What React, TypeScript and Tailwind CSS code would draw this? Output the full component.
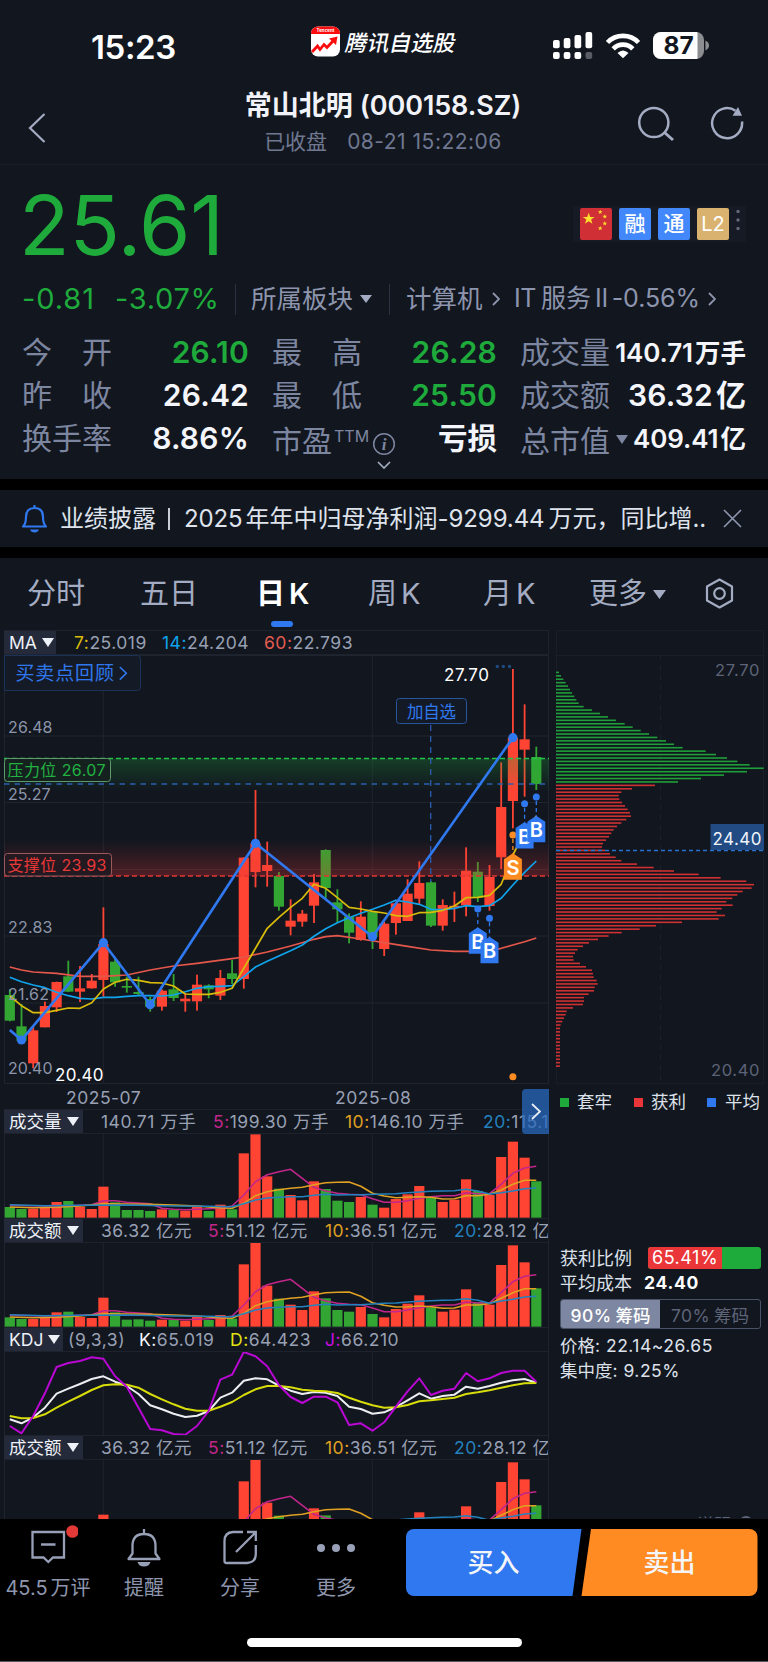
import React from "react";

/* ---------- data ---------- */
// [up, high, bodyTop, bodyBottom, low] in chart units (three per pixel)
const candles: [number, number, number, number, number][] = [
  [0, 1108, 1125, 1202, 1204], [0, 1152, 1219, 1262, 1268], [1, 1220, 1231, 1330, 1345], [1, 1145, 1158, 1222, 1222],
  [1, 1085, 1086, 1162, 1176], [0, 1022, 1069, 1115, 1116], [1, 1038, 1105, 1115, 1146], [1, 1062, 1082, 1105, 1106],
  [1, 862, 972, 1080, 1130], [0, 1015, 1025, 1087, 1100], [0, 1070, 1098, 1103, 1118], [0, 1070, 1116, 1122, 1126],
  [0, 1130, 1137, 1160, 1175], [1, 1108, 1112, 1160, 1172], [0, 1062, 1108, 1134, 1143], [1, 1120, 1136, 1144, 1175],
  [1, 1064, 1094, 1144, 1172], [0, 1093, 1096, 1108, 1135], [1, 1050, 1074, 1127, 1140], [0, 1020, 1060, 1077, 1092],
  [1, 712, 713, 1077, 1106], [1, 510, 670, 756, 802], [1, 665, 735, 753, 800], [0, 756, 768, 860, 872],
  [1, 838, 902, 920, 946], [1, 870, 881, 905, 920], [1, 762, 787, 857, 909], [0, 688, 690, 804, 836],
  [0, 808, 847, 868, 907], [0, 880, 890, 938, 970], [1, 844, 890, 960, 962], [0, 876, 876, 950, 987],
  [1, 905, 911, 987, 1008], [1, 845, 850, 909, 944], [1, 778, 821, 903, 903], [1, 724, 789, 836, 853],
  [0, 783, 787, 917, 921], [1, 838, 855, 917, 932], [1, 815, 857, 861, 906], [1, 682, 752, 856, 889],
  [0, 726, 755, 833, 846], [1, 735, 771, 858, 872], [1, 427, 561, 712, 747], [1, 147, 353, 543, 625],
  [1, 253, 358, 389, 530], [0, 380, 411, 492, 510],
];
const ma7 = [1128, 1157, 1178, 1178, 1171, 1164, 1165, 1148, 1107, 1087, 1078, 1081, 1088, 1089, 1098, 1122, 1123, 1123, 1117, 1105, 1045, 985, 925, 892, 862, 835, 793, 805, 833, 862, 867, 874, 879, 887, 889, 878, 877, 871, 858, 833, 832, 826, 793, 705, 635, 588];
const ma14 = [1072, 1085, 1095, 1103, 1117, 1127, 1135, 1137, 1132, 1132, 1129, 1127, 1127, 1128, 1125, 1115, 1105, 1100, 1099, 1097, 1070, 1041, 1024, 1008, 992, 975, 949, 926, 908, 893, 880, 868, 855, 841, 846, 853, 868, 869, 865, 857, 860, 857, 835, 795, 757, 723];
const ma60: [number, number][] = [[0, 1041], [1, 1050], [2, 1056], [4, 1060], [6, 1069], [8, 1069], [10, 1065], [12, 1050], [14, 1038], [16, 1030], [19, 1016], [20, 1011], [22, 996], [24, 978], [26, 958], [27, 950], [28, 947], [30, 957], [32, 968], [34, 979], [36, 990], [38, 994], [40, 994], [41, 992], [42, 985], [43, 975], [44, 965], [45, 954]];
const swing: [number, number][] = [[0, 1230], [1, 1260], [8, 968], [12, 1154], [21, 670], [31, 950], [43, 353]];

const volTops = [381, 387, 386, 384, 366, 363, 380, 387, 320, 367, 390, 390, 393, 388, 390, 392, 377, 393, 374, 388, 220, 163, 289, 326, 345, 361, 304, 327, 362, 366, 351, 374, 383, 357, 343, 318, 354, 366, 359, 298, 333, 345, 231, 185, 233, 304];
const amtTops = [712, 717, 717, 714, 697, 695, 711, 714, 653, 697, 719, 718, 722, 719, 719, 722, 711, 720, 705, 716, 553, 489, 617, 656, 674, 690, 634, 655, 690, 695, 681, 702, 712, 687, 671, 646, 682, 695, 689, 628, 667, 674, 555, 496, 547, 625];
const avg5: [number, number][] = [[0, 376], [4, 379], [7, 374], [8, 362], [9, 362], [10, 367], [11, 369], [12, 371], [13, 385], [14, 388], [15, 389], [16, 388], [17, 386], [18, 384], [19, 378], [20, 345], [21, 305], [22, 284], [23, 275], [24, 268], [25, 295], [26, 322], [27, 333], [28, 340], [29, 343], [30, 344], [31, 356], [32, 367], [33, 367], [34, 362], [35, 355], [36, 350], [37, 347], [38, 347], [39, 338], [40, 341], [41, 341], [42, 313], [43, 280], [44, 264], [45, 259]];
const avg10: [number, number][] = [[0, 381], [2, 383], [4, 382], [6, 378], [8, 371], [10, 372], [12, 373], [14, 375], [16, 378], [18, 384], [19, 385], [20, 370], [21, 347], [22, 335], [23, 329], [24, 325], [25, 322], [26, 314], [27, 308], [28, 307], [29, 306], [30, 319], [31, 340], [32, 348], [33, 353], [34, 352], [35, 350], [36, 352], [37, 357], [38, 356], [39, 347], [40, 347], [41, 343], [42, 330], [43, 313], [44, 301], [45, 301]];
const avg20: [number, number][] = [[0, 374], [3, 377], [6, 376], [10, 375], [14, 378], [17, 379], [19, 380], [20, 371], [21, 360], [22, 354], [23, 352], [24, 350], [25, 350], [26, 346], [27, 343], [28, 345], [29, 344], [30, 344], [32, 342], [33, 341], [34, 338], [35, 336], [36, 334], [37, 333], [38, 332], [39, 328], [40, 333], [41, 342], [42, 338], [43, 333], [44, 326], [45, 324]];

const kLine = [1018, 1030, 1012, 983, 941, 926, 912, 897, 889, 905, 918, 942, 976, 988, 1001, 1011, 1007, 993, 953, 938, 902, 895, 898, 917, 932, 942, 936, 938, 948, 980, 987, 1001, 997, 981, 961, 940, 956, 948, 944, 920, 926, 918, 908, 901, 897, 908];
const dLine = [1008, 1015, 1014, 1003, 983, 965, 948, 930, 916, 913, 914, 923, 942, 958, 973, 986, 992, 992, 980, 966, 945, 928, 918, 918, 922, 929, 932, 934, 939, 953, 965, 976, 983, 982, 975, 964, 961, 957, 953, 942, 937, 931, 923, 916, 910, 909];
const jLine = [1038, 1060, 1008, 940, 861, 849, 843, 832, 836, 889, 920, 983, 1047, 1051, 1062, 1064, 1038, 993, 899, 884, 816, 829, 859, 915, 951, 969, 950, 950, 967, 1035, 1030, 1052, 1027, 980, 934, 895, 945, 932, 926, 879, 904, 895, 879, 872, 872, 905];

const chipsLocked = [57, 63, 70, 77, 84, 90, 96, 103, 109, 116, 131, 156, 180, 204, 228, 254, 278, 302, 327, 352, 378, 402, 428, 497, 528, 561, 592, 629, 671, 621, 552, 483, 414];
const chipsProfit = [345, 276, 244, 236, 238, 246, 255, 263, 270, 273, 259, 244, 231, 221, 214, 207, 198, 189, 186, 195, 210, 227, 244, 291, 341, 402, 476, 542, 619, 642, 635, 608, 592, 577, 559, 578, 545, 530, 555, 536, 426, 348, 299, 245, 206, 174, 147, 129, 113, 105, 99, 101, 120, 138, 156, 159, 161, 170, 173, 164, 162, 146, 132, 132, 129, 99, 80, 77, 72, 67, 62, 60, 60, 60, 60, 60, 60, 60, 60, 60, 60, 60, 60];

const cx = (i: number) => 9.8 + 11.7 * i;
const cy = (v: number) => 620 + v / 3;
const iy = (v: number) => 1080 + v / 3;
const withIndex = (a: number[]): [number, number][] => a.map((v, i) => [i, v]);
const pts = (a: [number, number][], f: (v: number) => number) => a.map(([i, v]) => `${cx(i).toFixed(1)},${f(v).toFixed(1)}`).join(" ");

const RED = "#ff4433";
const GREEN = "#33a532";
const GRID = "#1f242f";
const SANS = "Inter, 'Noto Sans CJK SC', sans-serif";

/* ---------- small pieces ---------- */
const Caret = ({ w = 12, h = 9, c = "#a3acc2" }) => (
  <svg width={w} height={h} viewBox="0 0 12 9" preserveAspectRatio="none" className="shrink-0"><path d="M0 0H12L6 9Z" fill={c} /></svg>
);
const Arrow = ({ w = 8, h = 14, c = "#8c95ad", s = 1.8 }) => (
  <svg width={w} height={h} viewBox={`0 0 ${w} ${h}`} className="shrink-0" fill="none" stroke={c} strokeWidth={s}><path d={`M1 1L${w - 1} ${h / 2}L1 ${h - 1}`} /></svg>
);
const STAR = "M0 -6L1.500 -1.900H5.900L2.400 0.800L3.700 5L0 2.500L-3.700 5L-2.400 0.800L-5.900 -1.900H-1.500Z";

function StatusBar() {
  return (
    <div className="flex h-[86px] w-full items-start">
      <div className="ml-[91px] mt-[27px] w-[220px] text-[33px] font-semibold leading-[40px] tracking-[-0.4px] text-white">15:23</div>
      <svg width="29" height="31" viewBox="0 0 29 31" className="mt-[26px]">
        <rect y="0.5" width="29" height="30" rx="7" fill="#fff" />
        <path d="M0 8V7.5A7 7 0 0 1 7 .5H22A7 7 0 0 1 29 7.500V8Z" fill="#fb0d0d" />
        <text x="14.500" y="6.300" fontSize="4.500" fontWeight="700" textAnchor="middle" fill="#fff" fontFamily={SANS}>Tencent</text>
        <path d="M1 26L6.500 20L9 23.500L13 18.500L16 21.500L23 14" fill="none" stroke="#fb0d0d" strokeWidth="2.800" />
        <path d="M18 12.500L26.500 10.500L25 19Z" fill="#fb0d0d" />
      </svg>
      <div className="ml-[6px] mt-[26px] w-[207px]"><span className="inline-block -skew-x-12 text-[22px] font-medium leading-[34px] text-white">腾讯自选股</span></div>
      <svg width="156" height="30" viewBox="553 31 156 30" className="mt-[31px]">
        <g fill="#fff">
          <rect x="553" y="40" width="6.700" height="8.300" rx="2" /><rect x="563.700" y="38" width="6.700" height="10.300" rx="2" />
          <rect x="574.500" y="35" width="6.700" height="13.300" rx="2" /><rect x="585.500" y="32" width="6.700" height="16.300" rx="2" />
          <rect x="553" y="52" width="6.700" height="7" rx="2" /><rect x="563.700" y="52" width="6.700" height="7" rx="2" />
          <rect x="574.500" y="52" width="6.700" height="7" rx="2" /><rect x="585.500" y="52" width="6.700" height="7" rx="2" opacity=".3" />
        </g>
        <g fill="none" stroke="#fff" strokeWidth="4.600">
          <path d="M607.500 42.500A21.500 21.500 0 0 1 638.500 42.500" />
          <path d="M613.200 48.800A13.500 13.500 0 0 1 632.800 48.800" />
        </g>
        <path d="M617.500 53Q623 48 628.500 53L623 58.300Z" fill="#fff" />
        <clipPath id="batt"><rect x="653" y="32" width="51" height="27" rx="8" /></clipPath>
        <g clipPath="url(#batt)"><rect x="653" y="32" width="51" height="27" fill="#8b8d91" /><rect x="653" y="32" width="44.500" height="27" fill="#fff" /></g>
        <path d="M706 41.500A4.500 4.500 0 0 1 706 49.500Z" fill="#8b8d91" stroke="#8b8d91" strokeWidth="1.200" />
        <text x="678.700" y="54.300" fontSize="24.500" fontWeight="700" textAnchor="middle" fill="#12161f" fontFamily={SANS}>87</text>
      </svg>
    </div>
  );
}

function NavBar() {
  return (
    <div className="flex h-[79px] items-start border-b border-[#191e28]">
      <svg width="18" height="30" viewBox="0 0 18 30" className="ml-[28px] mt-[27px]" fill="none" stroke="#a3acc2" strokeWidth="2.200"><path d="M16.500 1L2 15L16.500 29" /></svg>
      <div className="flex w-[592px] flex-col items-center pl-[82px]">
        <div className="mt-[2px] text-[27px] font-semibold leading-[36px] text-[#f1f3f8] whitespace-nowrap"><span>常山北明</span><span className="ml-[7px] tracking-[-0.1px]">(000158.SZ)</span></div>
        <div className="flex text-[21px] leading-[36px] text-[#6f7890] whitespace-nowrap"><span>已收盘</span><span className="ml-[20px] tracking-[0.500px]">08-21 15:22:06</span></div>
      </div>
      <svg width="37" height="37" viewBox="637 106 37 37" className="mt-[20px]" fill="none" stroke="#a3acc2" strokeWidth="2.500"><circle cx="652.800" cy="122.500" r="14.600" /><path d="M663.500 132.500L672 140" strokeWidth="3" /></svg>
      <svg width="36" height="36" viewBox="710 105 36 36" className="ml-[35px] mt-[19px]" fill="none" stroke="#a3acc2" strokeWidth="2.500">
        <path d="M742 121.500A15 15 0 1 1 735.500 110.700" /><path d="M738 107L742 115.800L732.500 115.800Z" fill="#a3acc2" stroke="none" />
      </svg>
    </div>
  );
}

const Label = ({ t }: { t: string }) => (
  <span className="flex w-[90px] shrink-0 justify-between text-[30px] leading-[43px] text-[#7d86a0]">{t.split("").map((c, i) => <span key={i}>{c}</span>)}</span>
);

function Quote() {
  const val = "ml-auto whitespace-nowrap text-[30px] font-semibold leading-[43px] tracking-[0.200px]";
  return (
    <div className="flex h-[314px] flex-col">
      <div className="flex h-[104px] items-start">
        <div className="ml-[19px] mt-[8px] text-[83px] leading-[104px] tracking-[-0.200px] text-[#1eab3c]">25.61</div>
        <div className="ml-auto mr-[22px] mt-[41px] flex h-[36px] w-[173px] items-center gap-[7px] bg-[#151a24] pl-[7px]">
          <svg width="32" height="32" viewBox="0 0 32 32"><rect width="32" height="32" rx="2" fill="#d02f35" />
            <g fill="#ffde2e">
              <path d={STAR} transform="translate(8.700 10.800)" />
              <path d={STAR} transform="translate(20.200 4) scale(.4)" /><path d={STAR} transform="translate(24.800 8.600) scale(.4)" />
              <path d={STAR} transform="translate(24.800 15.400) scale(.4)" /><path d={STAR} transform="translate(20.200 20.300) scale(.4)" />
            </g></svg>
          <div className="h-[32px] w-[32px] rounded-[2px] bg-[#4288fb] text-center text-[21px] font-medium leading-[32px] text-white">融</div>
          <div className="h-[32px] w-[32px] rounded-[2px] bg-[#4288fb] text-center text-[21px] font-medium leading-[32px] text-white">通</div>
          <div className="h-[32px] w-[32px] rounded-[2px] bg-[#d8b26e] text-center text-[20px] leading-[32px] text-white">L2</div>
          <svg width="4" height="22" viewBox="0 0 4 22" fill="#636a7a" className="-mt-[8px]"><circle cx="2" cy="2.500" r="1.700" /><circle cx="2" cy="11" r="1.700" /><circle cx="2" cy="19.500" r="1.700" /></svg>
        </div>
      </div>
      <div className="flex h-[60px] items-center whitespace-nowrap text-[25px] text-[#8c95ad]">
        <span className="ml-[22px] w-[93px] text-[29px] tracking-[0.900px] text-[#1eab3c]">-0.81</span>
        <span className="w-[120px] text-[29px] tracking-[0.700px] text-[#1eab3c]">-3.07%</span>
        <i className="h-[31px] w-px bg-[#2b3140]" />
        <span className="ml-[15px] w-[109px] text-[25.500px]">所属板块</span><Caret h={8} />
        <i className="ml-[17px] h-[31px] w-px bg-[#2b3140]" />
        <span className="ml-[16px] w-[86px] text-[25.500px]">计算机</span><Arrow />
        <span className="ml-[14px] w-[192px] tracking-[-0.400px]">IT<span className="ml-[5px] tracking-normal">服务</span><span className="ml-[4px] mr-[4px]">II</span><span className="tracking-[-0.100px]">-0.56%</span></span><span className="ml-[2px] flex"><Arrow /></span>
      </div>
      <div className="flex h-[129px] pl-[22px] pr-[22px] pt-[2px] text-[#f4f6fb]">
        <div className="flex w-[227px] flex-col">
          <div className="flex h-[43px]"><Label t="今开" /><span className={val + " text-[#1eab3c]"}>26.10</span></div>
          <div className="flex h-[43px]"><Label t="昨收" /><span className={val}>26.42</span></div>
          <div className="flex h-[43px]"><Label t="换手率" /><span className={val}>8.86%</span></div>
        </div>
        <div className="ml-[23px] flex w-[225px] flex-col">
          <div className="flex h-[43px]"><Label t="最高" /><span className={val + " text-[#1eab3c]"}>26.28</span></div>
          <div className="flex h-[43px]"><Label t="最低" /><span className={val + " text-[#1eab3c]"}>25.50</span></div>
          <div className="flex h-[43px]">
            <span className="pt-[3px] text-[30px] leading-[43px] text-[#7d86a0]">市盈</span>
            <span className="ml-[2px] pt-[5px] text-[16px] leading-[28px] text-[#7d86a0]">TTM</span>
            <svg width="24" height="24" viewBox="0 0 24 24" className="ml-[3px] mt-[15px] shrink-0"><circle cx="12" cy="12" r="10.300" fill="none" stroke="#7d86a0" strokeWidth="1.500" /><text x="12" y="17.500" fontSize="17" fontStyle="italic" fontWeight="700" textAnchor="middle" fill="#7d86a0" fontFamily="'Liberation Serif', serif">i</text></svg>
            <span className="ml-auto whitespace-nowrap text-[29.500px] font-semibold leading-[43px]">亏损</span>
          </div>
        </div>
        <div className="ml-[23px] flex w-[226px] flex-col">
          <div className="flex h-[43px]"><Label t="成交量" /><span className="ml-auto whitespace-nowrap text-[26px] font-semibold leading-[43px] tracking-[-0.100px]">140.71<span className="ml-[2px] text-[25.500px] tracking-normal">万手</span></span></div>
          <div className="flex h-[43px]"><Label t="成交额" /><span className={val}>36.32<span className="ml-[3px] tracking-normal">亿</span></span></div>
          <div className="flex h-[43px] items-center"><span className="pt-[6px]"><Label t="总市值" /></span><span className="ml-[6px] mt-[2px]"><Caret w={12} h={9} c="#7d86a0" /></span><span className="ml-auto whitespace-nowrap text-[26px] font-semibold leading-[43px] tracking-[-0.100px]">409.41<span className="ml-[2px] text-[25.500px] tracking-normal">亿</span></span></div>
        </div>
      </div>
      <svg width="14" height="8" viewBox="0 0 14 8" className="ml-[377px] mt-[3px]" fill="none" stroke="#a3acc2" strokeWidth="1.700"><path d="M1 1L7 7L13 1" /></svg>
    </div>
  );
}

function Notice() {
  return (
    <div className="flex h-[79px] items-center border-y-[11px] border-black text-[24px] text-[#dfe3ec]">
      <svg width="27" height="30" viewBox="0 0 27 30" className="ml-[21px]" fill="none" stroke="#2f78ef" strokeWidth="2.200"><path d="M13.500 1V4M2 22.500Q5 20 5 13Q5 4 13.500 4Q22 4 22 13Q22 20 25 22.500Z" strokeLinejoin="round" /><path d="M9 25.500H18Q17 28.500 13.500 28.500Q10 28.500 9 25.500Z" fill="#2f78ef" stroke="none" /></svg>
      <span className="ml-[12px] w-[104px]">业绩披露</span>
      <i className="ml-[4px] h-[22px] w-[2px] bg-[#c9cdd8]" />
      <span className="ml-[14px] w-[525px] overflow-hidden whitespace-nowrap"><span className="tracking-[-0.100px]">2025</span><span className="ml-[3px]">年年中归母净利润</span><span className="tracking-[-0.100px]">-9299.44</span><span className="ml-[4px]">万元，同比增</span>..</span>
      <svg width="19" height="19" viewBox="0 0 19 19" className="ml-[14px]" stroke="#8c95ad" strokeWidth="1.700"><path d="M1 1L18 18M18 1L1 18" /></svg>
    </div>
  );
}

function Tabs() {
  return (
    <div className="flex h-[72px] items-start whitespace-nowrap pt-[14px] text-[29px] leading-[44px] text-[#a3acc2]">
      <span className="ml-[27px] w-[113px]">分时</span>
      <span className="w-[116px]">五日</span>
      <span className="flex w-[112px] flex-col font-semibold text-white"><span>日<span className="ml-[4px]">K</span></span><i className="ml-[15px] mt-[5px] h-[6px] w-[22px] rounded-[3px] bg-[#2f78ef]" /></span>
      <span className="w-[115px]">周<span className="ml-[4px]">K</span></span>
      <span className="w-[106px]">月<span className="ml-[4px]">K</span></span>
      <span className="w-[64px]">更多</span>
      <span className="flex h-[44px] items-center"><Caret w={13} h={9} /></span>
      <svg width="29" height="31" viewBox="0 0 29 31" className="ml-[39px] mt-[6px]" fill="none" stroke="#a3acc2" strokeWidth="2.200"><path d="M14.500 1.500L27 8.500V22.500L14.500 29.500L2 22.500V8.500Z" strokeLinejoin="round" /><circle cx="14.500" cy="15.500" r="5.300" /></svg>
    </div>
  );
}

const Flag = ({ i, top, dot, t, c = "#2f78ef" }: { i: number; top: number; dot: number; t: string; c?: string }) => {
  const x = cx(i);
  const y = cy(top);
  return (
    <g>
      <circle cx={x} cy={cy(dot)} r="3.500" fill={c} />
      <path d={`M${x} ${cy(dot) + 4}V${y}`} stroke={c} strokeWidth="1.300" strokeDasharray="4 3" />
      <path d={`M${x} ${y}L${x + 9} ${y + 6}V${y + 26.500}H${x - 9}V${y + 6}Z`} fill={c} />
      <text x={x} y={y + 21.500} fontSize="20" fontWeight="600" textAnchor="middle" fill="#fff" fontFamily={SANS}>{t}</text>
    </g>
  );
};

function MainChart() {
  const hl = (y: number) => <path key={y} d={`M4 ${y}H549`} stroke={GRID} strokeWidth="1" />;
  const lab = (x: number, y: number, t: string, len = 44.500) => <text x={x} y={y} textLength={len}>{t}</text>;
  return (
    <svg width="545" height="429" viewBox="4 655 545 429" className="block" fontFamily={SANS}>
      <defs>
        <linearGradient id="up" x1="0" y1="0" x2="0" y2="1"><stop offset="0" stopColor="#1eab3c" stopOpacity=".27" /><stop offset="1" stopColor="#1eab3c" stopOpacity="0" /></linearGradient>
        <linearGradient id="dn" x1="0" y1="0" x2="0" y2="1"><stop offset="0" stopColor="#e23434" stopOpacity="0" /><stop offset="1" stopColor="#e23434" stopOpacity=".3" /></linearGradient>
      </defs>
      {[736, 802.500, 869.500, 936, 1003].map(hl)}
      <path d="M103.300 655V1084M372.300 655V1084" stroke={GRID} />
      <path d="M4.500 655.500H548.500V1083.500H4.500Z" fill="none" stroke={GRID} />
      {candles.map(([up, h, t, b, l], i) => (
        <g key={i} fill={up ? RED : GREEN}>
          <rect x={cx(i) - 0.900} y={cy(h)} width="1.800" height={(l - h) / 3} />
          <rect x={cx(i) - 5.100} y={cy(t)} width="10.200" height={(b - t) / 3} />
        </g>
      ))}
      <rect x="4" y="758.500" width="545" height="33" fill="url(#up)" />
      <rect x="4" y="840" width="545" height="36" fill="url(#dn)" />
      <path d="M4 758.500H549" stroke="#22c447" strokeWidth="1.500" strokeDasharray="5 3" />
      <path d="M4 784H549" stroke="#2a5db0" strokeWidth="1.500" strokeDasharray="5.500 5" />
      <path d="M4 876H549" stroke="#e23434" strokeWidth="1.500" strokeDasharray="5 3" />
      <path d="M430.700 725V882" stroke="#2a5db0" strokeWidth="1.300" strokeDasharray="6 5" />
      <g fill="none" strokeWidth="1.700" strokeLinejoin="round">
        <polyline points={pts(ma60, cy)} stroke="#e4574b" />
        <polyline points={pts(withIndex(ma14), cy)} stroke="#10a4ec" />
        <polyline points={pts(withIndex(ma7), cy)} stroke="#d9bc0b" />
        <polyline points={pts(swing, cy)} stroke="#2f78ef" strokeWidth="2.600" />
      </g>
      {swing.slice(1).map(([i, v]) => <circle key={i} cx={cx(i)} cy={cy(v)} r="4.600" fill="#2f78ef" />)}
      <Flag i={43} top={700} dot={645} t="S" c="#ff8c22" />
      <Flag i={44} top={606} dot={551} t="B" />
      <Flag i={45} top={587} dot={531} t="B" />
      <Flag i={40} top={922} dot={867} t="B" />
      <Flag i={41} top={950} dot={895} t="B" />
      <circle cx={cx(43)} cy="1076.700" r="3.500" fill="#ff8c22" />
      <g fill="#8c95a9" fontSize="16">
        {lab(8, 733, "26.48")}{lab(8, 799.500, "25.27", 42.500)}{lab(8, 932.500, "22.83")}{lab(8, 1000, "21.62", 41)}{lab(8, 1074, "20.40")}
      </g>
      <g fill="#fff" fontSize="17">{lab(55, 1081, "20.40", 48.500)}{lab(444, 681, "27.70", 45)}</g>
      <g fill="#1f4a80"><circle cx="497.300" cy="666.500" r="1.700" /><circle cx="503.300" cy="666.500" r="1.700" /><circle cx="509.500" cy="666.500" r="1.700" /></g>
      <rect x="396.500" y="698.500" width="70" height="25" rx="3" fill="#131a26" stroke="#28559b" />
      <text x="407" y="717.500" fontSize="16.500" textLength="49" fill="#2f78ef">加自选</text>
      <rect x="4.500" y="758.500" width="106" height="23" rx="3" fill="#14211f" stroke="#5d9a6b" />
      <text x="7.500" y="776" fontSize="16" textLength="98" fill="#22b242">压力位 26.07</text>
      <rect x="4.500" y="853.500" width="107" height="22.500" rx="3" fill="#231920" stroke="#9c5a5e" />
      <text x="7.500" y="870.500" fontSize="16" textLength="99" fill="#e83838">支撑位 23.93</text>
      <path d="M4.500 655.500H137.500A3 3 0 0 1 140.500 658.500V687.500A3 3 0 0 1 137.500 690.500H4.500Z" fill="#151b26" stroke="#1b3358" />
      <text x="15.500" y="680" fontSize="19" textLength="98.500" fill="#2f78ef">买卖点回顾</text>
      <path d="M119.800 667L126.300 673.300L119.800 679.600" fill="none" stroke="#2f78ef" strokeWidth="1.600" />
    </svg>
  );
}

type Seg = { k?: string; c?: string; v: string; w: string };
function IndHeader({ name, nameW, segs }: { name: string; nameW: string; segs: Seg[] }) {
  return (
    <div className="flex h-[25px] items-center overflow-hidden whitespace-nowrap border border-[#1d222d] border-l-0 text-[17.500px] leading-[24px] tracking-[0.500px] text-[#98a0b3]">
      <span className={`flex h-[25px] shrink-0 items-center gap-[5px] bg-[#242a3a] pl-[5px] tracking-normal text-[#eef1f7] ${nameW}`}><span>{name}</span><Caret w={12} h={9} c="#eef1f7" /></span>
      {segs.map((s, i) => (
        <span key={i} className={`shrink-0 ${s.w}`}>{s.k && <span className={s.c}>{s.k}:</span>}{s.v}</span>
      ))}
    </div>
  );
}

function Bars({ tops, base, y0, h, off, clipH }: { tops: number[]; base: number; y0: number; h: number; off: (i: number) => number; clipH: number }) {
  const sh = (a: [number, number][]): [number, number][] => a.map(([i, v]) => [i, v + off(i)]);
  return (
    <svg width="545" height={clipH} viewBox={`4 ${y0} 545 ${clipH}`} className="block">
      <path d={`M103.300 ${y0}V${y0 + h}M372.300 ${y0}V${y0 + h}M548.500 ${y0}V${y0 + h}M4.500 ${y0}V${y0 + h}`} stroke={GRID} />
      {tops.map((v, i) => <rect key={i} x={cx(i) - 5.100} y={iy(v)} width="10.200" height={(base - v) / 3} fill={candles[i][0] ? RED : GREEN} />)}
      <g fill="none" strokeWidth="1.600" strokeLinejoin="round">
        <polyline points={pts(sh(avg5), iy)} stroke="#c1268a" /><polyline points={pts(sh(avg10), iy)} stroke="#e0a122" /><polyline points={pts(sh(avg20), iy)} stroke="#2382bd" />
      </g>
    </svg>
  );
}

const amtOff = (i: number) => (i > 41 ? 325 : i > 30 ? 328 : 330);
const amtSegs: Seg[] = [
  { v: "36.32 亿元", w: "w-[107px]" },
  { k: "5", c: "text-[#c1268a]", v: "51.12 亿元", w: "w-[117px]" },
  { k: "10", c: "text-[#e0a122]", v: "36.51 亿元", w: "w-[129px]" },
  { k: "20", c: "text-[#2382bd]", v: "28.12 亿元", w: "" },
];

function LeftColumn() {
  return (
    <div className="relative w-[545px] shrink-0">
      <IndHeader name="MA" nameW="w-[52px]" segs={[
        { k: "7", c: "ml-[18px] text-[#d9bc0b]", v: "25.019", w: "w-[106px]" },
        { k: "14", c: "text-[#10a4ec]", v: "24.204", w: "w-[102px]" },
        { k: "60", c: "text-[#e35c50]", v: "22.793", w: "" },
      ]} />
      <MainChart />
      <div className="flex h-[25px] items-center pt-[3px] text-[17.500px] tracking-[0.500px] text-[#98a0b3]"><span className="ml-[62px] w-[269px]">2025-07</span><span>2025-08</span></div>
      <IndHeader name="成交量" nameW="w-[79px] mr-[18px]" segs={[
        { v: "140.71 万手", w: "w-[112px]" },
        { k: "5", c: "text-[#c1268a]", v: "199.30 万手", w: "w-[132px]" },
        { k: "10", c: "text-[#e0a122]", v: "146.10 万手", w: "w-[138px]" },
        { k: "20", c: "text-[#2382bd]", v: "115.16 万手", w: "" },
      ]} />
      <Bars tops={volTops} base={413} y0={1134} h={84} clipH={84} off={() => 0} />
      <IndHeader name="成交额" nameW="w-[79px] mr-[18px]" segs={amtSegs} />
      <Bars tops={amtTops} base={740} y0={1243} h={84} clipH={84} off={amtOff} />
      <IndHeader name="KDJ" nameW="w-[59px] mr-[5px]" segs={[
        { v: "(9,3,3)", w: "w-[71px]" },
        { k: "K", c: "text-[#f4f6fb]", v: "65.019", w: "w-[91px]" },
        { k: "D", c: "text-[#e2e411]", v: "64.423", w: "w-[95px]" },
        { k: "J", c: "text-[#c80be0]", v: "66.210", w: "" },
      ]} />
      <svg width="545" height="83" viewBox="4 1352 545 83" className="block">
        <path d="M103.300 1352V1435M372.300 1352V1435M548.500 1352V1435M4.500 1352V1435" stroke={GRID} />
        <g fill="none" strokeWidth="2" strokeLinejoin="round">
          <polyline points={pts(withIndex(kLine), iy)} stroke="#eceef2" /><polyline points={pts(withIndex(dLine), iy)} stroke="#d7dc0a" /><polyline points={pts(withIndex(jLine), iy)} stroke="#b907d4" />
        </g>
      </svg>
      <IndHeader name="成交额" nameW="w-[79px] mr-[18px]" segs={amtSegs} />
      <div className="h-[59px] overflow-hidden"><Bars tops={amtTops} base={740} y0={1243} h={84} clipH={84} off={amtOff} /></div>
      <div className="absolute right-0 top-[459px] flex h-[45px] w-[27px] items-center justify-center rounded-l-[4px] bg-[#2768bd]/75"><Arrow w={10} h={17} c="#e8edf6" s={1.8} /></div>
    </div>
  );
}

function ChipChart() {
  const y = (n: number) => 672.400 + n * 3.4235;
  return (
    <svg width="208" height="454" viewBox="556 630 208 454" className="block" fontFamily={SANS}>
      <path d="M556.500 630.500H763.500V1083.500H556.500ZM556 655.500H764" fill="none" stroke="#191e28" />
      <path d="M660.500 655V1084" stroke="#1b202a" strokeDasharray="5 5" />
      {chipsLocked.map((v, i) => <rect key={i} x="556" y={y(i) - 0.800} width={(v - 48) / 3} height="1.600" fill="#1f9f39" />)}
      {chipsProfit.map((v, i) => <rect key={i} x="556" y={y(i + 33) - 0.800} width={(v - 48) / 3} height="1.600" fill="#cf3132" />)}
      <path d="M556 850.500H764" stroke="#2a72cf" strokeWidth="1.300" strokeDasharray="4 3" />
      <rect x="710.500" y="824" width="53.500" height="26" fill="#214b82" />
      <g fontSize="16.500" fill="#5d6478">
        <text x="715" y="676" textLength="44.500">27.70</text><text x="711" y="1076" textLength="48.500">20.40</text>
        <text x="712.500" y="844.500" fontSize="17" textLength="49" fill="#f1f4fa">24.40</text>
      </g>
    </svg>
  );
}

function RightColumn() {
  return (
    <div className="ml-[7px] flex w-[208px] flex-col text-[17.500px] text-[#dde1ea]">
      <ChipChart />
      <div className="flex h-[36px] items-center pl-[4px] pt-[1px] text-[17.500px]">
        <i className="h-[9px] w-[9px] bg-[#1eab3c]" /><span className="ml-[8px] w-[57px]">套牢</span>
        <i className="h-[9px] w-[9px] bg-[#ea3638]" /><span className="ml-[8px] w-[56px]">获利</span>
        <i className="h-[9px] w-[9px] bg-[#2f78ef]" /><span className="ml-[9px]">平均</span>
      </div>
      <div className="mt-[125px] flex h-[26px] items-center pl-[4px]">
        <span className="w-[88px] text-[18px]">获利比例</span>
        <div className="flex h-[22px] w-[113px] overflow-hidden rounded-[3px] bg-[#1eab3c]"><span className="w-[74px] bg-[#ea3638] pl-[4px] text-[18px] leading-[22px] tracking-[0.500px] text-white">65.41%</span></div>
      </div>
      <div className="flex h-[25px] items-center pl-[4px]"><span className="w-[84px] text-[18px]">平均成本</span><span className="font-bold tracking-[0.700px] text-white">24.40</span></div>
      <div className="ml-[4px] mt-[3px] flex h-[30px] w-[201px] overflow-hidden rounded-[3px] border border-[#4a5268] leading-[32px]">
        <span className="w-[99px] bg-[#7e87a1] text-center font-medium text-white"><span className="tracking-[0.400px]">90%</span><span className="ml-[4px]">筹码</span></span>
        <span className="flex-1 text-center text-[#5d6478]"><span className="tracking-[0.400px]">70%</span><span className="ml-[4px]">筹码</span></span>
      </div>
      <span className="mt-[4px] pl-[4px] leading-[25px]">价格<span className="tracking-[0.500px]">: 22.14~26.65</span></span>
      <span className="pl-[4px] leading-[25px]">集中度<span className="tracking-[0.500px]">: 9.25%</span></span>
      <div className="mt-[131px] flex h-[4px] items-start gap-[8px] overflow-hidden pl-[141px] text-[17px] leading-[22px] text-[#5d6478]"><span>说明</span><i className="mt-[2px] h-[14px] w-[14px] rounded-full border-2 border-[#5d6478]" /></div>
    </div>
  );
}

function BottomBar() {
  const item = "flex w-[96px] flex-col items-center text-[20px] leading-[30px] text-[#8d96ad] whitespace-nowrap";
  const st = { fill: "none", stroke: "#98a0b8", strokeWidth: 2.3 };
  return (
    <div className="flex h-[143px] flex-col bg-black">
      <div className="flex h-[119px] pt-[4px]">
        <div className={item}>
          <svg width="60" height="45" viewBox="18 1523 60 45" {...st}><path d="M32.500 1532H64V1557.500H53L48.300 1562L43.500 1557.500H32.500ZM41 1544.500H55.500" /><circle cx="72.500" cy="1531.500" r="6.300" fill="#e33a37" stroke="none" /></svg>
          <span className="mt-[5px]">45.5<span className="ml-[3px]">万评</span></span>
        </div>
        <div className={item}>
          <svg width="38" height="45" viewBox="125 1523 38 45" {...st}><path d="M144 1529V1534M128.500 1559L132.500 1553.500V1546Q132.500 1534 144 1534Q155.500 1534 155.500 1546V1553.500L159.500 1559Z" strokeLinejoin="round" /><path d="M137.500 1562H150.500Q149 1566.500 144 1566.500Q139 1566.500 137.500 1562Z" fill="#98a0b8" stroke="none" /></svg>
          <span className="mt-[5px]">提醒</span>
        </div>
        <div className={item}>
          <svg width="38" height="45" viewBox="221 1523 38 45" {...st}><path d="M243 1532H233Q224.500 1532.500 224.500 1541V1561Q224.500 1563 226.500 1563H247Q255.800 1562.500 255.800 1554V1545M236 1552L255 1533M247 1532H255.800V1541" /></svg>
          <span className="mt-[5px]">分享</span>
        </div>
        <div className={item}>
          <svg width="40" height="45" viewBox="316 1523 40 45" fill="#98a0b8"><circle cx="321" cy="1548" r="4" /><circle cx="336" cy="1548" r="4" /><circle cx="351" cy="1548" r="4" /></svg>
          <span className="mt-[5px]">更多</span>
        </div>
        <div className="ml-[22px] mt-[6px] grid h-[67px] w-[353px]">
          <svg width="353" height="67" viewBox="0 0 353 67" className="col-start-1 row-start-1"><path d="M8 0H175.500L166.500 67H8A8 8 0 0 1 0 59V8A8 8 0 0 1 8 0Z" fill="#2f78ef" /><path d="M185 0H343.500A8 8 0 0 1 351.500 8V59A8 8 0 0 1 343.500 67H175.500Z" fill="#ff8b22" /></svg>
          <div className="col-start-1 row-start-1 flex text-[26px] font-medium leading-[68px] text-[#f4f5f8]"><span className="w-[175px] text-center">买入</span><span className="w-[177px] text-center">卖出</span></div>
        </div>
      </div>
      <div className="mx-auto h-[9px] w-[275px] rounded-full bg-white" />
      <div className="mt-auto h-px bg-[#55575c]" />
    </div>
  );
}

export default function App() {
  return (
    <div className="flex h-[1662px] w-[768px] flex-col overflow-hidden bg-[#12161f] font-['Inter','Noto_Sans_CJK_SC',sans-serif]">
      <StatusBar />
      <NavBar />
      <Quote />
      <Notice />
      <Tabs />
      <div className="flex h-[889px] overflow-hidden pl-[4px]">
        <LeftColumn />
        <RightColumn />
      </div>
      <BottomBar />
    </div>
  );
}
